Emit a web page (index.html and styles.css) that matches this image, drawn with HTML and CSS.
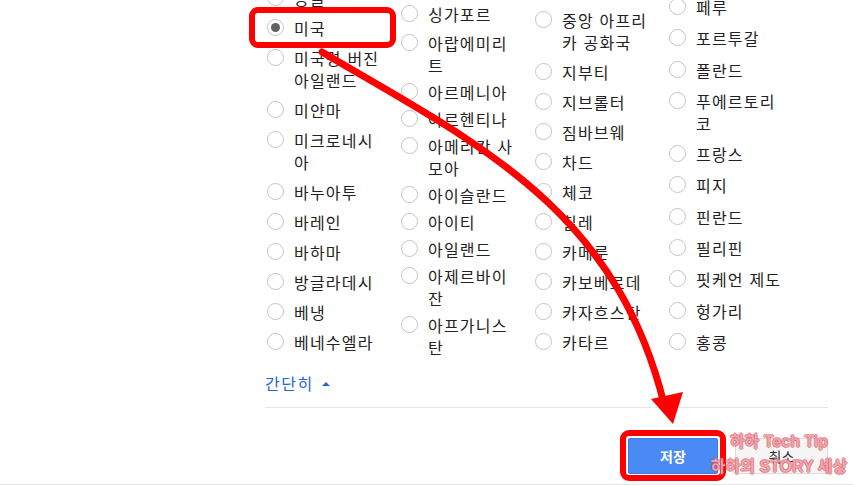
FILE: index.html
```html
<!DOCTYPE html>
<html lang="ko">
<head>
    <meta charset="UTF-8">
    <meta name="viewport" content="width=device-width, initial-scale=1.0">
    <title>국가 선택</title>
    <link rel="stylesheet" href="styles.css">
</head>
<body>
    <div class="page">
        <div class="panel">
            <div class="country-list">
                <div class="col col1">
                    <label class="item"><span class="radio"></span><span class="name">몽골</span></label>
                    <label class="item"><span class="radio checked"></span><span class="name">미국</span></label>
                    <label class="item"><span class="radio"></span><span class="name">미국령 버진 아일랜드</span></label>
                    <label class="item"><span class="radio"></span><span class="name">미얀마</span></label>
                    <label class="item"><span class="radio"></span><span class="name">미크로네시아</span></label>
                    <label class="item"><span class="radio"></span><span class="name">바누아투</span></label>
                    <label class="item"><span class="radio"></span><span class="name">바레인</span></label>
                    <label class="item"><span class="radio"></span><span class="name">바하마</span></label>
                    <label class="item"><span class="radio"></span><span class="name">방글라데시</span></label>
                    <label class="item"><span class="radio"></span><span class="name">베냉</span></label>
                    <label class="item"><span class="radio"></span><span class="name">베네수엘라</span></label>
                </div>
                <div class="col col2">
                    <label class="item"><span class="radio"></span><span class="name">싱가포르</span></label>
                    <label class="item"><span class="radio"></span><span class="name">아랍에미리트</span></label>
                    <label class="item"><span class="radio"></span><span class="name">아르메니아</span></label>
                    <label class="item"><span class="radio"></span><span class="name">아르헨티나</span></label>
                    <label class="item"><span class="radio"></span><span class="name">아메리칸 사모아</span></label>
                    <label class="item"><span class="radio"></span><span class="name">아이슬란드</span></label>
                    <label class="item"><span class="radio"></span><span class="name">아이티</span></label>
                    <label class="item"><span class="radio"></span><span class="name">아일랜드</span></label>
                    <label class="item"><span class="radio"></span><span class="name">아제르바이잔</span></label>
                    <label class="item"><span class="radio"></span><span class="name">아프가니스탄</span></label>
                </div>
                <div class="col col3">
                    <label class="item"><span class="radio"></span><span class="name">중앙 아프리카 공화국</span></label>
                    <label class="item"><span class="radio"></span><span class="name">지부티</span></label>
                    <label class="item"><span class="radio"></span><span class="name">지브롤터</span></label>
                    <label class="item"><span class="radio"></span><span class="name">짐바브웨</span></label>
                    <label class="item"><span class="radio"></span><span class="name">차드</span></label>
                    <label class="item"><span class="radio"></span><span class="name">체코</span></label>
                    <label class="item"><span class="radio"></span><span class="name">칠레</span></label>
                    <label class="item"><span class="radio"></span><span class="name">카메룬</span></label>
                    <label class="item"><span class="radio"></span><span class="name">카보베르데</span></label>
                    <label class="item"><span class="radio"></span><span class="name">카자흐스탄</span></label>
                    <label class="item"><span class="radio"></span><span class="name">카타르</span></label>
                </div>
                <div class="col col4">
                    <label class="item"><span class="radio"></span><span class="name">페루</span></label>
                    <label class="item"><span class="radio"></span><span class="name">포르투갈</span></label>
                    <label class="item"><span class="radio"></span><span class="name">폴란드</span></label>
                    <label class="item"><span class="radio"></span><span class="name">푸에르토리코</span></label>
                    <label class="item"><span class="radio"></span><span class="name">프랑스</span></label>
                    <label class="item"><span class="radio"></span><span class="name">피지</span></label>
                    <label class="item"><span class="radio"></span><span class="name">핀란드</span></label>
                    <label class="item"><span class="radio"></span><span class="name">필리핀</span></label>
                    <label class="item"><span class="radio"></span><span class="name">핏케언 제도</span></label>
                    <label class="item"><span class="radio"></span><span class="name">헝가리</span></label>
                    <label class="item"><span class="radio"></span><span class="name">홍콩</span></label>
                </div>
            </div>

            <a class="collapse" href="#">간단히 <span class="caret"></span></a>

            <div class="actions">
                <button class="btn btn-save">저장</button>
                <button class="btn btn-cancel">취소</button>
            </div>
        </div>
        <div class="bottom-line"></div>

        <!-- 강조 표시 -->
        <div class="mark mark-country"></div>
        <div class="mark mark-save"></div>
        <svg class="arrow" width="853" height="485" viewBox="0 0 853 485">
            <path d="M322 52 C 470 140, 615 205, 664 404" fill="none" stroke="#ff0000" stroke-width="7" stroke-linecap="round"/>
            <polygon points="673,424 651,399 683,392" fill="#ff0000"/>
        </svg>

        <div class="watermark">
            <span>하하 Tech Tip</span>
            <span>하하의 STORY 세상</span>
        </div>
    </div>
</body>
</html>
```

FILE: styles.css
```css
body {
    margin: 0;
    background: #fff;
    font-family: "Noto Sans CJK KR", "Noto Sans", sans-serif;
    color: #222;
}

.page {
    position: relative;
    width: 853px;
    height: 485px;
    overflow: hidden;
}

.panel {
    margin-left: 265px;
    width: 563px;
}

.country-list {
    display: grid;
    grid-template-columns: repeat(4, 134px);
    align-items: start;
    margin-top: -13px;
    padding-left: 2px;
}

.col {
    display: flex;
    flex-direction: column;
    gap: 8px;
}

.col2 {
    padding-top: 16px;
    gap: 5px;
}

.col2 .item:first-child {
    margin-bottom: 2px;
}

.col3 {
    padding-top: 22px;
}

.col4 {
    padding-top: 9px;
    gap: 9.3px;
}

.item {
    display: flex;
    align-items: flex-start;
    gap: 10px;
    font-size: 16px;
    line-height: 22px;
    letter-spacing: 1.2px;
    cursor: pointer;
}

.radio {
    flex: none;
    width: 15px;
    height: 15px;
    margin-top: 2px;
    border: 1px solid #c4c4c4;
    border-radius: 50%;
    background: #fff;
    display: flex;
    align-items: center;
    justify-content: center;
}

.radio.checked::after {
    content: "";
    width: 9px;
    height: 9px;
    border-radius: 50%;
    background: #616161;
}

.name {
    max-width: 90px;
}

.collapse {
    display: inline-flex;
    align-items: center;
    gap: 8px;
    margin-top: 14px;
    font-size: 16px;
    line-height: 22px;
    letter-spacing: 1.5px;
    color: #2a62d9;
    text-decoration: none;
}

.caret {
    width: 0;
    height: 0;
    border-left: 4px solid transparent;
    border-right: 4px solid transparent;
    border-bottom: 4px solid #2a62d9;
    margin-top: 2px;
}

.actions {
    display: flex;
    justify-content: flex-end;
    gap: 17px;
    margin-top: 12px;
    padding-top: 30px;
    border-top: 1px solid #e6e6e6;
}

.btn {
    height: 36px;
    font-family: inherit;
    font-size: 14px;
    border-radius: 2px;
    cursor: pointer;
}

.btn-save {
    width: 90px;
    background: #4a8af4;
    border: 1px solid #3b7be6;
    color: #fff;
    font-weight: bold;
}

.btn-cancel {
    width: 93px;
    background: #f5f5f5;
    border: 1px solid #dcdcdc;
    color: #333;
}

.bottom-line {
    position: absolute;
    left: 0;
    right: 0;
    top: 484px;
    border-top: 1px solid #e6e6e6;
}

.mark {
    position: absolute;
    border: 6px solid #ff0000;
    border-radius: 9px;
    box-sizing: border-box;
}

.mark-country {
    left: 249px;
    top: 7px;
    width: 147px;
    height: 41px;
}

.mark-save {
    left: 620px;
    top: 430px;
    width: 106px;
    height: 51px;
}

.arrow {
    position: absolute;
    left: 0;
    top: 0;
    pointer-events: none;
}

.watermark {
    position: absolute;
    left: 706px;
    top: 429px;
    width: 146px;
    display: flex;
    flex-direction: column;
    align-items: center;
    font-family: "Liberation Sans", "Noto Sans CJK KR", sans-serif;
    font-weight: bold;
    font-size: 16px;
    line-height: 25px;
    color: rgba(248, 190, 196, 0.75);
    text-shadow: -1px 0 rgba(214, 70, 82, 0.55), 1px 0 rgba(214, 70, 82, 0.55), 0 -1px rgba(214, 70, 82, 0.55), 0 1px rgba(214, 70, 82, 0.55);
    pointer-events: none;
}
```
